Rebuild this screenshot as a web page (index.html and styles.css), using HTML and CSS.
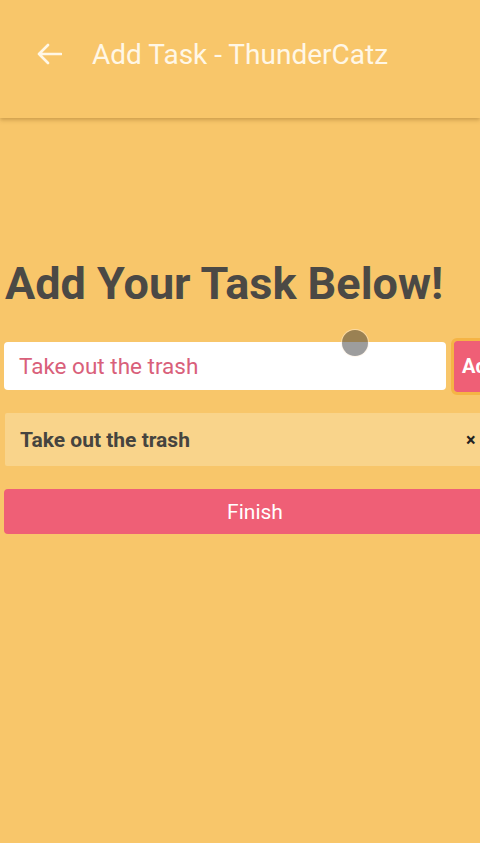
FILE: index.html
```html
<!DOCTYPE html>
<html>
<head>
<meta charset="utf-8">
<link rel="stylesheet" href="styles.css">
</head>
<body>
<header class="appbar">
  <div class="appbar-row">
    <svg class="back" width="26" height="22" viewBox="0 0 26 22"><path d="M25 11H3M12 2L3 11L12 20" fill="none" stroke="#fff7e6" stroke-width="2.6" stroke-linecap="round" stroke-linejoin="round"/></svg>
    <span class="title">Add Task - ThunderCatz</span>
  </div>
</header>
<main class="content">
  <h1 class="heading">Add Your Task Below!</h1>
  <div class="input-row">
    <div class="input">Take out the trash</div>
    <button class="add-btn">Add</button>
  </div>
  <div class="task">
    <span class="task-text">Take out the trash</span>
    <span class="task-x">×</span>
  </div>
  <button class="finish">Finish</button>
</main>
<div class="touch"></div>
</body>
</html>
```
FILE: styles.css
```css
html, body {
  margin: 0;
  width: 480px;
  height: 843px;
  overflow: hidden;
  background: #f8c66a;
  font-family: Roboto, "Noto Sans", sans-serif;
}
.appbar {
  height: 118px;
  background: #f8c66a;
  box-shadow: 0 2px 4px rgba(120, 80, 20, 0.35);
  position: relative;
  z-index: 1;
}
.appbar-row {
  height: 108px;
  display: flex;
  align-items: center;
  padding-left: 36px;
  gap: 30px;
}
.back { display: block; }
.title {
  color: #fff7e6;
  font-size: 28px;
  font-weight: 400;
}
.content {
  width: 502px;
  padding: 0 0 0 4px;
}
.heading {
  margin: 141px 0 0 1px;
  font-size: 45px;
  line-height: 50px;
  font-weight: 700;
  color: #4b4945;
}
.input-row {
  margin-top: 31px;
  display: flex;
  align-items: center;
  gap: 8px;
  height: 52px;
}
.input {
  width: 427px;
  height: 48px;
  flex: none;
  background: #fff;
  border-radius: 4px;
  padding-left: 15px;
  display: flex;
  align-items: center;
  font-size: 22.5px;
  color: #d9607a;
}
.add-btn {
  flex: none;
  width: 60px;
  height: 51px;
  border: none;
  border-radius: 3px;
  background: #ef5f76;
  color: #fff;
  font-family: inherit;
  font-weight: 700;
  font-size: 20px;
  text-align: left;
  padding-left: 8px;
  outline: 3px solid #f5b445;
}
.task {
  margin: 21px 0 0 1px;
  height: 53px;
  background: #f9d48b;
  display: flex;
  align-items: center;
  padding: 0 0 0 15px;
  border-radius: 2px;
}
.task-text {
  font-size: 21px;
  font-weight: 700;
  color: #46443f;
  flex: none;
  width: 446px;
}
.task-x {
  font-size: 18px;
  font-weight: 700;
  color: #222;
}
.finish {
  display: block;
  margin-top: 23px;
  width: 502px;
  height: 45px;
  border: none;
  border-radius: 4px;
  background: #ef5f76;
  color: #fff;
  font-family: inherit;
  font-size: 21px;
}
.touch {
  position: absolute;
  left: 342px;
  top: 330px;
  width: 26px;
  height: 26px;
  border-radius: 50%;
  background: rgba(60, 60, 60, 0.5);
  box-shadow: 0 0 0 1px rgba(255, 240, 220, 0.5);
}
```
